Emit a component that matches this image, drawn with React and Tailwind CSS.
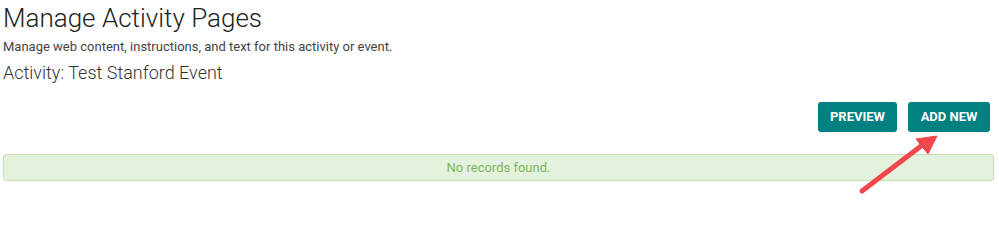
export default function App() {
  return (
    <div className="relative w-[999px] h-[220px] bg-white px-[3px] font-['Roboto',sans-serif]">
      <h1 className="pt-[1px] text-[26px] leading-[34px] font-light text-[#222]">Manage Activity Pages</h1>
      <p className="mt-[4px] text-[13px] leading-[16px] text-[#444]">
        Manage web content, instructions, and text for this activity or event.
      </p>
      <h2 className="mt-[6px] text-[18px] leading-[24px] font-light text-[#333]">Activity: Test Stanford Event</h2>

      <div className="mt-[17px] flex justify-end gap-[11px] pr-[6px]">
        <button className="h-[30px] w-[79px] rounded-[3px] bg-[#008080] text-[13px] font-bold text-white">
          PREVIEW
        </button>
        <button className="h-[30px] w-[82px] rounded-[3px] bg-[#008080] text-[13px] font-bold text-white">
          ADD NEW
        </button>
      </div>

      <div className="mt-[22px] mr-[2px] flex h-[27px] items-center justify-center rounded-[3px] border border-[#c3e1b0] bg-[#e4f1dd] text-[13px] text-[#7bb860]">
        No records found.
      </div>

      {/* annotation arrow */}
      <svg className="absolute left-0 top-0 pointer-events-none" width="999" height="220">
        <line x1="862" y1="191" x2="925" y2="143" stroke="#f0474b" strokeWidth="5" strokeLinecap="round" />
        <polygon points="937,136 916,139 928,154" fill="#f0474b" stroke="#f0474b" strokeLinejoin="round" strokeWidth="1" />
      </svg>
    </div>
  )
}
